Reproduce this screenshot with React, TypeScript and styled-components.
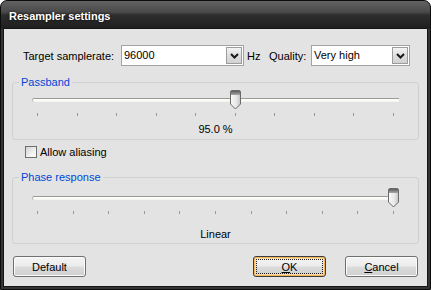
import React from "react";
import styled, { createGlobalStyle } from "styled-components";

const Global = createGlobalStyle`
  html, body {
    margin: 0;
    padding: 0;
    background: #ffffff;
    overflow: hidden;
  }
  body {
    font-family: "Liberation Sans", Arial, sans-serif;
    font-size: 11px;
    color: #000;
  }
`;

const Window = styled.div`
  width: 431px;
  height: 290px;
  box-sizing: border-box;
  border: 1px solid #0c0c0c;
  border-radius: 7px 7px 0 0;
  background: linear-gradient(
    to bottom,
    #626262 0px,
    #4a4a4a 11px,
    #2e2e2e 14px,
    #1f1f1f 27px,
    #343434 28px,
    #343434 100%
  );
  padding: 0 2px 2px 2px;
  display: flex;
  flex-direction: column;
`;

const TitleBar = styled.div`
  height: 27px;
  box-sizing: border-box;
  padding: 2px 0 0 6px;
  display: flex;
  align-items: center;
  color: #fff;
  font-weight: bold;
  font-size: 11px;
  text-shadow: 0 0 3px rgba(0, 0, 0, 0.8);
`;

const Client = styled.div`
  flex: 1;
  border: 1px solid #151515;
  background: #e3e3e3;
  padding: 16px 8px 0 8px;
  display: flex;
  flex-direction: column;
`;

const TopRow = styled.div`
  display: flex;
  align-items: center;
  height: 21px;
  padding-left: 11px;
`;

const Label = styled.span<{ $w?: number }>`
  display: inline-block;
  width: ${(p) => (p.$w ? `${p.$w}px` : "auto")};
  white-space: nowrap;
  flex-shrink: 0;
`;

const Unit = styled(Label)`
  padding-left: 3px;
  box-sizing: border-box;
`;

const Combo = styled.div<{ $w: number }>`
  width: ${(p) => p.$w}px;
  height: 21px;
  box-sizing: border-box;
  border: 1px solid #a2a2a2;
  background: #fff;
  display: flex;
  flex-shrink: 0;
`;

const ComboText = styled.div`
  flex: 1;
  padding-left: 2px;
  line-height: 19px;
`;

const ComboButton = styled.div`
  width: 16px;
  margin: 1px;
  box-sizing: border-box;
  border: 1px solid #9c9c9c;
  background: linear-gradient(to bottom, #f4f4f4, #dedede 50%, #d2d2d2);
  display: flex;
  align-items: center;
  justify-content: center;
`;

const GroupBox = styled.div<{ $top: number; $bottom: number }>`
  margin-top: ${(p) => p.$top}px;
  border: 1px solid #d0d0d0;
  border-radius: 3px;
  padding: 0 19px ${(p) => p.$bottom}px 19px;
  display: flex;
  flex-direction: column;
`;

const Legend = styled.div`
  align-self: flex-start;
  margin: -7px 0 0 -13px;
  padding: 0 2px;
  line-height: 13px;
  background: #e3e3e3;
  color: #0046d5;
`;

const SliderBox = styled.div<{ $pad: number }>`
  position: relative;
  height: 20px;
  margin-top: ${(p) => p.$pad}px;
`;

const Track = styled.div`
  margin-top: 8px;
  height: 4px;
  box-sizing: border-box;
  border-top: 1px solid #9b9b94;
  border-left: 1px solid #b8b8b0;
  border-radius: 2px 0 0 2px;
  background: linear-gradient(to bottom, #ffffff, #f4f4ee);
`;

const Thumb = styled.svg`
  position: absolute;
  top: 0;
`;

const Ticks = styled.div`
  margin-top: 3px;
  height: 3px;
  padding: 0 5px;
  display: flex;
  justify-content: space-between;
`;

const Tick = styled.span`
  width: 1px;
  height: 3px;
  background: #999999;
`;

const Value = styled.div<{ $top: number }>`
  margin-top: ${(p) => p.$top}px;
  line-height: 13px;
  text-align: center;
`;

const CheckRow = styled.label`
  display: flex;
  align-items: center;
  margin-top: 5px;
  padding-left: 13px;
  height: 13px;
  gap: 3px;
`;

const CheckBox = styled.span`
  width: 12px;
  height: 12px;
  box-sizing: border-box;
  border: 1px solid #6f6f6f;
  background: linear-gradient(135deg, #d4d4d4, #f6f6f6 70%, #ffffff);
`;

const ButtonRow = styled.div`
  display: flex;
  margin-top: 12px;
  padding: 0 1px;
  gap: 19px;
`;

const Spacer = styled.div`
  flex: 1;
`;

const Button = styled.button<{ $default?: boolean }>`
  position: relative;
  width: 73px;
  height: 21px;
  padding: 0;
  font: inherit;
  color: #000;
  border: 1px solid ${(p) => (p.$default ? "#3c3c3c" : "#707070")};
  border-radius: 3px;
  background: linear-gradient(to bottom, #f4f4f4 0%, #ececec 48%, #dcdcdc 52%, #cfcfcf 100%);
  box-shadow: ${(p) =>
    p.$default ? "inset 0 0 0 1px #f2b65c, inset 0 0 0 2px #f9dca8" : "inset 0 0 0 1px #fbfbfb"};
  &::after {
    content: "";
    display: ${(p) => (p.$default ? "block" : "none")};
    position: absolute;
    inset: 2px;
    border: 1px dotted #202020;
  }
`;

const Chevron = () => (
  <svg width="9" height="6" viewBox="0 0 9 6">
    <polyline points="1,1 4.5,4.5 8,1" fill="none" stroke="#1a1a1a" strokeWidth="2" />
  </svg>
);

const ThumbIcon: React.FC<{ left: number }> = ({ left }) => (
  <Thumb width="11" height="20" viewBox="0 0 11 20" style={{ left }}>
    <defs>
      <linearGradient id="tb" x1="0" x2="1" y1="0" y2="0">
        <stop offset="0" stopColor="#fbfbfb" />
        <stop offset="0.6" stopColor="#e6e6e6" />
        <stop offset="1" stopColor="#c4c4c4" />
      </linearGradient>
      <linearGradient id="tt" x1="0" x2="0" y1="0" y2="1">
        <stop offset="0" stopColor="#5e5e5e" />
        <stop offset="1" stopColor="#a8a8a8" />
      </linearGradient>
    </defs>
    <path
      d="M0.5 2 Q0.5 0.5 2 0.5 H9 Q10.5 0.5 10.5 2 V14 L5.5 19 L0.5 14 Z"
      fill="url(#tb)"
      stroke="#6a6a6a"
    />
    <rect x="1" y="1" width="9" height="4" fill="url(#tt)" />
  </Thumb>
);

// distance the thumb travels along the track, in px
const TRACK_RANGE = 356;

const Slider: React.FC<{ ticks: number; pos: number; pad: number }> = ({ ticks, pos, pad }) => (
  <>
    <SliderBox $pad={pad}>
      <Track />
      <ThumbIcon left={Math.round(pos * TRACK_RANGE)} />
    </SliderBox>
    <Ticks>
      {Array.from({ length: ticks }).map((_, i) => (
        <Tick key={i} />
      ))}
    </Ticks>
  </>
);

export default function App() {
  return (
    <>
      <Global />
      <Window>
        <TitleBar>Resampler settings</TitleBar>
        <Client>
          <TopRow>
            <Label $w={98}>Target samplerate:</Label>
            <Combo $w={123}>
              <ComboText>96000</ComboText>
              <ComboButton>
                <Chevron />
              </ComboButton>
            </Combo>
            <Unit $w={25}>Hz</Unit>
            <Label $w={42}>Quality:</Label>
            <Combo $w={99}>
              <ComboText>Very high</ComboText>
              <ComboButton>
                <Chevron />
              </ComboButton>
            </Combo>
          </TopRow>

          <GroupBox $top={16} $bottom={3}>
            <Legend>Passband</Legend>
            <Slider ticks={10} pos={5 / 9} pad={1} />
            <Value $top={7}>95.0 %</Value>
          </GroupBox>

          <CheckRow>
            <CheckBox />
            Allow aliasing
          </CheckRow>

          <GroupBox $top={19} $bottom={2}>
            <Legend>Phase response</Legend>
            <Slider ticks={11} pos={1} pad={4} />
            <Value $top={14}>Linear</Value>
          </GroupBox>

          <ButtonRow>
            <Button>Default</Button>
            <Spacer />
            <Button $default>
              <u>O</u>K
            </Button>
            <Button>
              <u>C</u>ancel
            </Button>
          </ButtonRow>
        </Client>
      </Window>
    </>
  );
}
